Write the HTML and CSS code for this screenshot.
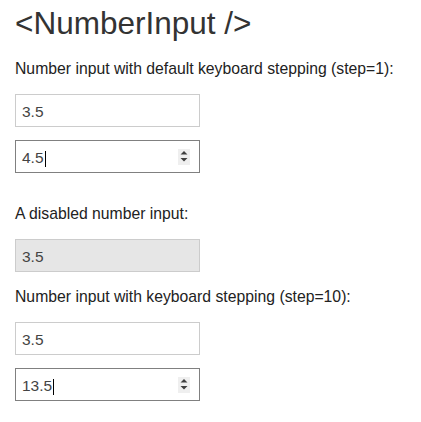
FILE: index.html
```html
<!DOCTYPE html>
<html>
<head>
<meta charset="utf-8">
<link rel="stylesheet" href="styles.css">
</head>
<body>
<div class="page">
  <h1 class="title">&lt;NumberInput /&gt;</h1>

  <p class="label first">Number input with default keyboard stepping (step=1):</p>
  <div class="field">3.5</div>
  <div class="field focused"><span class="value">4.5</span><span class="caret"></span>
    <span class="spin"><svg width="12" height="16" viewBox="0 0 12 16"><path d="M2.5 5.5 L6 2 L9.5 5.5 Z M2.5 9 L9.5 9 L6 12.5 Z" fill="#404040"/></svg></span>
  </div>

  <p class="label second">A disabled number input:</p>
  <div class="field disabled">3.5</div>

  <p class="label third">Number input with keyboard stepping (step=10):</p>
  <div class="field">3.5</div>
  <div class="field focused"><span class="value">13.5</span><span class="caret"></span>
    <span class="spin"><svg width="12" height="16" viewBox="0 0 12 16"><path d="M2.5 5.5 L6 2 L9.5 5.5 Z M2.5 9 L9.5 9 L6 12.5 Z" fill="#404040"/></svg></span>
  </div>
</div>
</body>
</html>
```
FILE: styles.css
```css
html, body {
  margin: 0;
  padding: 0;
  background: #ffffff;
}
body {
  font-family: "Liberation Sans", Arial, sans-serif;
  color: #333333;
}
.page {
  padding: 5px 15px 0 15px;
}
.title {
  margin: 0;
  font-size: 31.5px;
  line-height: 36px;
  font-weight: normal;
  color: #333333;
}
.label {
  margin: 0;
  font-size: 15.75px;
  line-height: 20px;
  color: #222222;
}
.first { margin-top: 18px; margin-bottom: 15px; }
.second { margin-top: 31px; margin-bottom: 15px; }
.third { margin-top: 15px; margin-bottom: 15px; }
.field {
  box-sizing: border-box;
  width: 185px;
  height: 33px;
  border: 1px solid #cccccc;
  padding: 8px 6px 6px 6px;
  font-size: 15.5px;
  line-height: 17px;
  color: #444444;
  background: #ffffff;
  margin-bottom: 13px;
  display: flex;
  align-items: flex-start;
  position: relative;
}
.field.disabled {
  background: #e6e6e6;
}
.field.focused {
  border-color: #808080;
}
.caret {
  width: 1px;
  height: 16px;
  background: #000000;
  margin-top: 2px;
  margin-left: 1px;
}
.spin {
  position: absolute;
  right: 9px;
  top: 8px;
  width: 12px;
  height: 16px;
  background: #efefef;
  display: block;
}
.spin svg { display: block; }
```
